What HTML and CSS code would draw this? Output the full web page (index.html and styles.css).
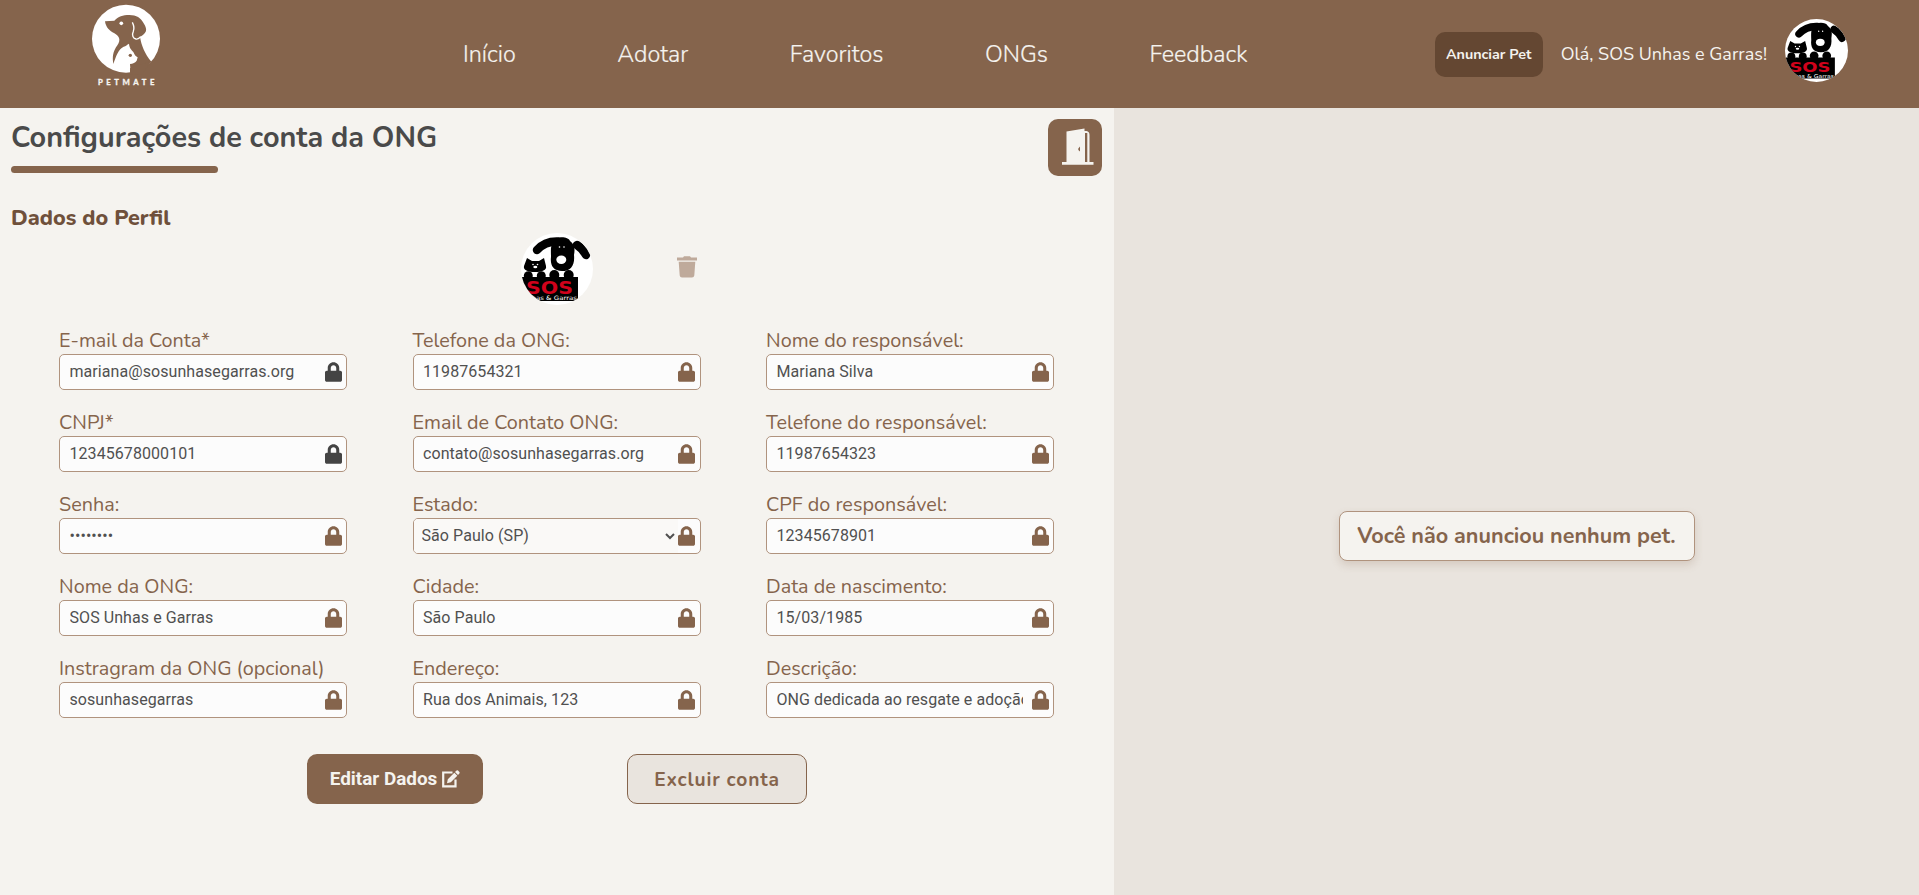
FILE: index.html
```html
<!DOCTYPE html>
<html lang="pt-BR">
<head>
<meta charset="utf-8">
<title>PetMate</title>
<link rel="stylesheet" href="styles.css">
</head>
<body>
<svg class="defs" width="0" height="0">
  <symbol id="lock" viewBox="0 0 448 512"><path d="M400 224h-24v-72C376 68.200 307.800 0 224 0S72 68.200 72 152v72H48c-26.500 0-48 21.500-48 48v192c0 26.500 21.500 48 48 48h352c26.500 0 48-21.500 48-48V272c0-26.500-21.500-48-48-48zm-104 0H152v-72c0-39.700 32.300-72 72-72s72 32.300 72 72v72z"/></symbol>
  <symbol id="pets" viewBox="0 0 72 72">
    <path d="M37 8.500Q24 8 16 17M56 12Q61 15 65 22" fill="none" stroke="#000" stroke-width="8.500" stroke-linecap="round"/>
    <path d="M33 8C35 3 47 3 49 8C54 12 54 16 53 22C54 32 50 38 41 38C32 38 29 32 30 24C30 18 29 12 33 8Z"/>
    <path d="M6 25l5 3h7l5-3 2 8c1 4-4 6-11 6s-12-2-11-6z"/>
    <circle cx="7.300" cy="42.700" r="4.500"/><circle cx="20.300" cy="42.700" r="4.500"/><circle cx="33.300" cy="42" r="5"/><circle cx="47.700" cy="42" r="5"/>
    <path d="M1 44H57V68H1Z"/>
    <g fill="#fff"><circle cx="38.500" cy="14" r=".8"/><circle cx="43" cy="14" r=".8"/><ellipse cx="40.300" cy="26.700" rx="5" ry="4.200"/><circle cx="12" cy="31.500" r=".8"/><circle cx="16.500" cy="31.500" r=".8"/><ellipse cx="14.300" cy="34" rx="2" ry="1.200"/></g>
  </symbol>
</svg>

<header class="header">
  <svg class="logo" viewBox="0 0 330 324">
    <circle cx="168" cy="116" r="102" fill="#fff"/>
    <path class="dog" d="M105 64L133 62C145 50 158 45 178 45C200 45 212 54 220 68C228 80 231 90 226 97C222 104 216 108 210 111C214 135 224 162 244 185L222 205L182 219L180 192C188 191 197 188 200 182L203 172C198 170 193 164 190 156C184 149 178 144 177 131C171 134 168 139 161 140C144 148 138 170 130 192C126 170 130 155 138 142C144 133 149 126 148 117C146 108 140 104 132 99C120 94 107 82 105 64Z"/>
    <path d="M244 183L215 225L180 222V205Z" class="dog"/>
    <path d="M187 67C192 77 194 84 190 94C184 106 190 115 198 117C204 118 209 114 212 110" fill="none" stroke="#fff" stroke-width="4"/>
    <circle cx="154" cy="70" r="5.500" fill="#fff"/><circle class="dog" cx="181" cy="166" r="5"/>
    <text class="logo-name" x="84" y="255" textLength="169">PETMATE</text>
  </svg>
  <nav class="nav">
    <a>Início</a><a>Adotar</a><a>Favoritos</a><a>ONGs</a><a>Feedback</a>
  </nav>
  <div class="user">
    <button class="announce">Anunciar Pet</button>
    <span class="hello">Olá, SOS Unhas e Garras!</span>
    <svg class="avatar avatar-small" viewBox="0 0 72 72">
      <use href="#pets"/>
      <text class="sos-name" x="5" y="61" textLength="47" lengthAdjust="spacingAndGlyphs">SOS</text>
      <text class="sos-sub" x="1" y="67.200" textLength="55" lengthAdjust="spacingAndGlyphs">Unhas &amp; Garras</text>
    </svg>
  </div>
</header>

<main class="main">
  <section class="account">
    <div class="account-head">
      <div>
        <h1 class="title">Configurações de conta da ONG</h1>
        <div class="bar"></div>
      </div>
      <button class="exit">
        <svg viewBox="0 0 54 57"><path fill="#f5f3ef" d="M18.500 12.500L36.500 9.500V12H38.500Q41.500 12.500 41.500 16V43H45.500V45.800H14V43H18.500Z"/><path class="dog" d="M37 14H39.300V43H37ZM30.300 29.500L32 27.500V32.500L30.300 31Z"/></svg>
      </button>
    </div>
    <h2 class="subtitle">Dados do Perfil</h2>
    <div class="photo">
      <svg class="avatar" viewBox="0 0 72 72">
        <use href="#pets"/>
        <text class="sos-name" x="5" y="61" textLength="47" lengthAdjust="spacingAndGlyphs">SOS</text>
        <text class="sos-sub" x="1" y="67.200" textLength="55" lengthAdjust="spacingAndGlyphs">Unhas &amp; Garras</text>
      </svg>
      <svg class="trash" viewBox="0 0 20 22"><path d="M0 1.500H6L7 .3H13L14 1.500H20V4.500H0ZM1.700 5.700H18.300L17.300 19.500Q17 21.500 15 21.500H5Q3 21.500 2.700 19.500Z"/></svg>
    </div>
    <form class="fields">
      <div class="field"><label>E-mail da Conta*</label><div class="box"><input value="mariana@sosunhasegarras.org" readonly><svg class="lock dark"><use href="#lock"/></svg></div></div>
      <div class="field"><label>Telefone da ONG:</label><div class="box"><input value="11987654321" readonly><svg class="lock"><use href="#lock"/></svg></div></div>
      <div class="field"><label>Nome do responsável:</label><div class="box"><input value="Mariana Silva" readonly><svg class="lock"><use href="#lock"/></svg></div></div>
      <div class="field"><label>CNPJ*</label><div class="box"><input value="12345678000101" readonly><svg class="lock dark"><use href="#lock"/></svg></div></div>
      <div class="field"><label>Email de Contato ONG:</label><div class="box"><input value="contato@sosunhasegarras.org" readonly><svg class="lock"><use href="#lock"/></svg></div></div>
      <div class="field"><label>Telefone do responsável:</label><div class="box"><input value="11987654323" readonly><svg class="lock"><use href="#lock"/></svg></div></div>
      <div class="field"><label>Senha:</label><div class="box"><input type="password" value="senha123" readonly><svg class="lock"><use href="#lock"/></svg></div></div>
      <div class="field"><label>Estado:</label><div class="box"><select><option>São Paulo (SP)</option></select><svg class="lock"><use href="#lock"/></svg></div></div>
      <div class="field"><label>CPF do responsável:</label><div class="box"><input value="12345678901" readonly><svg class="lock"><use href="#lock"/></svg></div></div>
      <div class="field"><label>Nome da ONG:</label><div class="box"><input value="SOS Unhas e Garras" readonly><svg class="lock"><use href="#lock"/></svg></div></div>
      <div class="field"><label>Cidade:</label><div class="box"><input value="São Paulo" readonly><svg class="lock"><use href="#lock"/></svg></div></div>
      <div class="field"><label>Data de nascimento:</label><div class="box"><input value="15/03/1985" readonly><svg class="lock"><use href="#lock"/></svg></div></div>
      <div class="field"><label>Instragram da ONG (opcional)</label><div class="box"><input value="sosunhasegarras" readonly><svg class="lock"><use href="#lock"/></svg></div></div>
      <div class="field"><label>Endereço:</label><div class="box"><input value="Rua dos Animais, 123" readonly><svg class="lock"><use href="#lock"/></svg></div></div>
      <div class="field"><label>Descrição:</label><div class="box"><input value="ONG dedicada ao resgate e adoção de animais" readonly><svg class="lock"><use href="#lock"/></svg></div></div>
    </form>
    <div class="actions">
      <button class="edit">Editar Dados
        <svg viewBox="0 0 18 18"><path d="M10.500 2.500H1.200V16.300H13.500V9.500" fill="none" stroke="#f5f3ef" stroke-width="2.200"/><path fill="#f5f3ef" d="M5 13.300L5.800 9.300L12.300 2.800L15.300 5.800L8.800 12.300ZM13 2.100L14.600.6Q15.300 0 16 .6L17.400 2Q18 2.800 17.400 3.500L16 5.100Z"/></svg>
      </button>
      <button class="delete">Excluir conta</button>
    </div>
  </section>
  <aside class="pets"><p class="empty">Você não anunciou nenhum pet.</p></aside>
</main>
</body>
</html>
```
FILE: styles.css
```css
* { box-sizing: border-box; }
body { margin: 0; height: 895px; overflow: hidden; display: flex; flex-direction: column; font-family: Nunito, Lato, sans-serif; background: #e9e4de; }
button { font-family: inherit; margin: 0; padding: 0; border: 0; }
.defs { position: absolute; }
.dog { fill: #85644c; }

.header { height: 108px; background: #85644c; color: #f5f3ef; display: flex; align-items: center; padding: 0 71px 0 70px; }
.logo { width: 110px; height: 108px; }
.logo-name { font: 900 23px Lato, sans-serif; fill: #f5f3ef; stroke: #f5f3ef; stroke-width: .8px; }
.nav { display: flex; gap: 101.500px; margin-left: 283px; font-size: 23.400px; font-weight: 300; -webkit-text-stroke: .2px #f5f3ef; }
.user { display: flex; align-items: center; margin-left: auto; }
.announce { width: 108px; height: 45px; border-radius: 10px; background: #644732; color: #f5f3ef; font-size: 14.300px; font-weight: 700; }
.hello { font-size: 18px; margin: 0 18px; }

.avatar { width: 72px; height: 72px; border-radius: 50%; background: #fff; overflow: hidden; }
.avatar-small { width: 63px; height: 63px; margin-top: -7px; }
.sos-name { font: bold 17px "DejaVu Sans", sans-serif; fill: #d0021b; }
.sos-sub { font: 6px "DejaVu Sans", sans-serif; fill: #fff; }

.main { flex: 1; display: flex; }
.account { width: 1114px; background: #f5f3ef; padding: 11px 12px 0 11px; }
.account-head { display: flex; justify-content: space-between; height: 57px; }
.title { margin: 0; font-size: 28.800px; line-height: 38px; font-weight: 700; color: #4a4a4a; }
.bar { width: 207px; height: 7px; margin-top: 9px; border-radius: 5px; background: #85644c; }
.exit { width: 54px; height: 57px; border-radius: 10px; background: #85644c; }
.exit svg { display: block; }
.subtitle { margin: 28px 0 0; font-size: 21.600px; line-height: 28px; font-weight: 800; color: #6f503b; }
.photo { display: flex; height: 72px; margin: 1px 0 0 510px; }
.trash { width: 20px; height: 22px; margin: 23px 0 0 84px; fill: #bfaa9b; }

.fields { display: grid; grid-template-columns: repeat(3, 288px); column-gap: 65.500px; row-gap: 20px; margin: 23px 0 0 48px; }
.field { height: 62px; }
.field label { display: block; height: 26px; line-height: 26px; font-size: 19.800px; color: #85644c; white-space: nowrap; }
.box { display: flex; align-items: center; height: 36px; border: 1px solid #b0937e; border-radius: 5px; background: #fcfcfc; overflow: hidden; }
.box input, .box select { border: 0; outline: 0; background: transparent; color: #505050; font: 16px Roboto, sans-serif; letter-spacing: .07px; }
.box input { flex: 1; min-width: 0; height: 34px; padding: 0 0 2px; margin: 0 9px 0 9.500px; }
.box select { width: 265px; height: 34px; padding: 0 0 2px 4px; background: #faf9f7; }
.lock { width: 17px; height: 20px; margin-right: 4.500px; flex: none; fill: #85644c; }
.dark { fill: #444; }

.actions { display: flex; gap: 144px; margin: 36px 0 0 296px; }
.edit { width: 176px; height: 50px; border-radius: 10px; background: #85644c; color: #f5f3ef; font: bold 18.900px Roboto, sans-serif; display: flex; align-items: center; justify-content: center; gap: 5px; padding-bottom: 1px; }
.edit svg { width: 18px; height: 18px; }
.delete { width: 180px; height: 50px; border: 1px solid #85644c; border-radius: 10px; background: #e9e4de; color: #85644c; font-size: 19.200px; font-weight: 700; letter-spacing: .85px; padding-top: 1px; }

.pets { flex: 1; display: flex; align-items: center; justify-content: center; padding: 69px 0 0; }
.empty { width: 356px; height: 50px; margin: 0; display: flex; align-items: center; justify-content: center; border: 1px solid #b0937e; border-radius: 8px; background: #f5f3ef; color: #85644c; font-size: 21.600px; font-weight: 700; box-shadow: 0 4px 8px rgba(133, 100, 76, .2); }
```
